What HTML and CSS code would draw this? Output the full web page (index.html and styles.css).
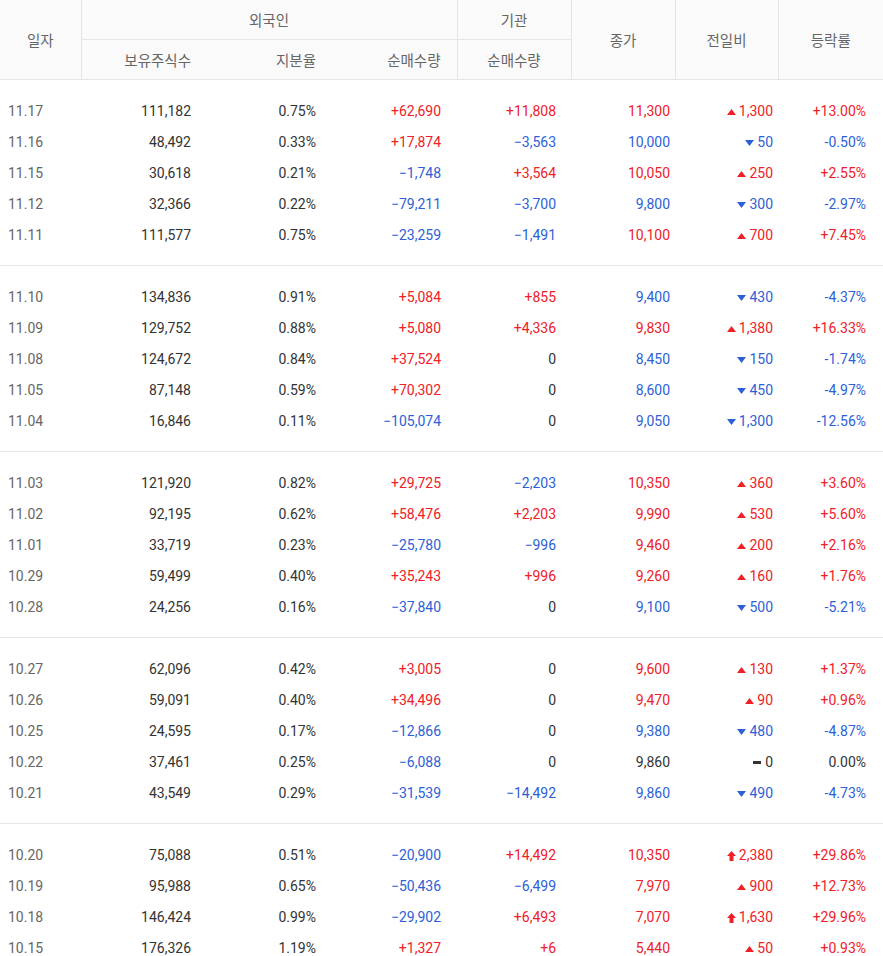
FILE: index.html
```html
<!DOCTYPE html>
<html lang="ko">
<head>
<meta charset="utf-8">
<link rel="stylesheet" href="styles.css">
</head>
<body>
<table class="tbl">
  <colgroup>
    <col class="c-date"><col class="c-hold"><col class="c-rate"><col class="c-fnet"><col class="c-inet"><col class="c-close"><col class="c-diff"><col class="c-pct">
  </colgroup>
  <thead>
    <tr class="h1">
      <th rowspan="2" class="ctr">일자</th>
      <th colspan="3" class="ctr">외국인</th>
      <th class="ctr">기관</th>
      <th rowspan="2" class="ctr">종가</th>
      <th rowspan="2" class="ctr">전일비</th>
      <th rowspan="2" class="ctr">등락률</th>
    </tr>
    <tr class="h2">
      <th class="rt">보유주식수</th>
      <th class="rt">지분율</th>
      <th class="rt">순매수량</th>
      <th class="ctr">순매수량</th>
    </tr>
  </thead>
  <tbody class="grp">
    <tr><td class="d">11.17</td><td>111,182</td><td>0.75%</td><td class="r">+62,690</td><td class="r">+11,808</td><td class="r cl">11,300</td><td class="r cl"><svg class="ico" viewBox="0 0 9 6"><path d="M4.5 0L9 6H0z" fill="#f02027"/></svg>1,300</td><td class="r pc">+13.00%</td></tr>
    <tr><td class="d">11.16</td><td>48,492</td><td>0.33%</td><td class="r">+17,874</td><td class="b">−3,563</td><td class="b cl">10,000</td><td class="b cl"><svg class="ico" viewBox="0 0 9 6"><path d="M0 0H9L4.5 6z" fill="#2d5fd8"/></svg>50</td><td class="b pc">-0.50%</td></tr>
    <tr><td class="d">11.15</td><td>30,618</td><td>0.21%</td><td class="b">−1,748</td><td class="r">+3,564</td><td class="r cl">10,050</td><td class="r cl"><svg class="ico" viewBox="0 0 9 6"><path d="M4.5 0L9 6H0z" fill="#f02027"/></svg>250</td><td class="r pc">+2.55%</td></tr>
    <tr><td class="d">11.12</td><td>32,366</td><td>0.22%</td><td class="b">−79,211</td><td class="b">−3,700</td><td class="b cl">9,800</td><td class="b cl"><svg class="ico" viewBox="0 0 9 6"><path d="M0 0H9L4.5 6z" fill="#2d5fd8"/></svg>300</td><td class="b pc">-2.97%</td></tr>
    <tr><td class="d">11.11</td><td>111,577</td><td>0.75%</td><td class="b">−23,259</td><td class="b">−1,491</td><td class="r cl">10,100</td><td class="r cl"><svg class="ico" viewBox="0 0 9 6"><path d="M4.5 0L9 6H0z" fill="#f02027"/></svg>700</td><td class="r pc">+7.45%</td></tr>
  </tbody>
  <tbody class="grp">
    <tr><td class="d">11.10</td><td>134,836</td><td>0.91%</td><td class="r">+5,084</td><td class="r">+855</td><td class="b cl">9,400</td><td class="b cl"><svg class="ico" viewBox="0 0 9 6"><path d="M0 0H9L4.5 6z" fill="#2d5fd8"/></svg>430</td><td class="b pc">-4.37%</td></tr>
    <tr><td class="d">11.09</td><td>129,752</td><td>0.88%</td><td class="r">+5,080</td><td class="r">+4,336</td><td class="r cl">9,830</td><td class="r cl"><svg class="ico" viewBox="0 0 9 6"><path d="M4.5 0L9 6H0z" fill="#f02027"/></svg>1,380</td><td class="r pc">+16.33%</td></tr>
    <tr><td class="d">11.08</td><td>124,672</td><td>0.84%</td><td class="r">+37,524</td><td>0</td><td class="b cl">8,450</td><td class="b cl"><svg class="ico" viewBox="0 0 9 6"><path d="M0 0H9L4.5 6z" fill="#2d5fd8"/></svg>150</td><td class="b pc">-1.74%</td></tr>
    <tr><td class="d">11.05</td><td>87,148</td><td>0.59%</td><td class="r">+70,302</td><td>0</td><td class="b cl">8,600</td><td class="b cl"><svg class="ico" viewBox="0 0 9 6"><path d="M0 0H9L4.5 6z" fill="#2d5fd8"/></svg>450</td><td class="b pc">-4.97%</td></tr>
    <tr><td class="d">11.04</td><td>16,846</td><td>0.11%</td><td class="b">−105,074</td><td>0</td><td class="b cl">9,050</td><td class="b cl"><svg class="ico" viewBox="0 0 9 6"><path d="M0 0H9L4.5 6z" fill="#2d5fd8"/></svg>1,300</td><td class="b pc">-12.56%</td></tr>
  </tbody>
  <tbody class="grp">
    <tr><td class="d">11.03</td><td>121,920</td><td>0.82%</td><td class="r">+29,725</td><td class="b">−2,203</td><td class="r cl">10,350</td><td class="r cl"><svg class="ico" viewBox="0 0 9 6"><path d="M4.5 0L9 6H0z" fill="#f02027"/></svg>360</td><td class="r pc">+3.60%</td></tr>
    <tr><td class="d">11.02</td><td>92,195</td><td>0.62%</td><td class="r">+58,476</td><td class="r">+2,203</td><td class="r cl">9,990</td><td class="r cl"><svg class="ico" viewBox="0 0 9 6"><path d="M4.5 0L9 6H0z" fill="#f02027"/></svg>530</td><td class="r pc">+5.60%</td></tr>
    <tr><td class="d">11.01</td><td>33,719</td><td>0.23%</td><td class="b">−25,780</td><td class="b">−996</td><td class="r cl">9,460</td><td class="r cl"><svg class="ico" viewBox="0 0 9 6"><path d="M4.5 0L9 6H0z" fill="#f02027"/></svg>200</td><td class="r pc">+2.16%</td></tr>
    <tr><td class="d">10.29</td><td>59,499</td><td>0.40%</td><td class="r">+35,243</td><td class="r">+996</td><td class="r cl">9,260</td><td class="r cl"><svg class="ico" viewBox="0 0 9 6"><path d="M4.5 0L9 6H0z" fill="#f02027"/></svg>160</td><td class="r pc">+1.76%</td></tr>
    <tr><td class="d">10.28</td><td>24,256</td><td>0.16%</td><td class="b">−37,840</td><td>0</td><td class="b cl">9,100</td><td class="b cl"><svg class="ico" viewBox="0 0 9 6"><path d="M0 0H9L4.5 6z" fill="#2d5fd8"/></svg>500</td><td class="b pc">-5.21%</td></tr>
  </tbody>
  <tbody class="grp">
    <tr><td class="d">10.27</td><td>62,096</td><td>0.42%</td><td class="r">+3,005</td><td>0</td><td class="r cl">9,600</td><td class="r cl"><svg class="ico" viewBox="0 0 9 6"><path d="M4.5 0L9 6H0z" fill="#f02027"/></svg>130</td><td class="r pc">+1.37%</td></tr>
    <tr><td class="d">10.26</td><td>59,091</td><td>0.40%</td><td class="r">+34,496</td><td>0</td><td class="r cl">9,470</td><td class="r cl"><svg class="ico" viewBox="0 0 9 6"><path d="M4.5 0L9 6H0z" fill="#f02027"/></svg>90</td><td class="r pc">+0.96%</td></tr>
    <tr><td class="d">10.25</td><td>24,595</td><td>0.17%</td><td class="b">−12,866</td><td>0</td><td class="b cl">9,380</td><td class="b cl"><svg class="ico" viewBox="0 0 9 6"><path d="M0 0H9L4.5 6z" fill="#2d5fd8"/></svg>480</td><td class="b pc">-4.87%</td></tr>
    <tr><td class="d">10.22</td><td>37,461</td><td>0.25%</td><td class="b">−6,088</td><td>0</td><td class="cl">9,860</td><td class="cl"><svg class="ico dash" viewBox="0 0 8 3"><rect width="8" height="3" fill="#333"/></svg>0</td><td class="pc">0.00%</td></tr>
    <tr><td class="d">10.21</td><td>43,549</td><td>0.29%</td><td class="b">−31,539</td><td class="b">−14,492</td><td class="b cl">9,860</td><td class="b cl"><svg class="ico" viewBox="0 0 9 6"><path d="M0 0H9L4.5 6z" fill="#2d5fd8"/></svg>490</td><td class="b pc">-4.73%</td></tr>
  </tbody>
  <tbody class="grp">
    <tr><td class="d">10.20</td><td>75,088</td><td>0.51%</td><td class="b">−20,900</td><td class="r">+14,492</td><td class="r cl">10,350</td><td class="r cl"><svg class="ico lim" viewBox="0 0 9 10"><path d="M4.5 0L9 5H6.5V10H2.5V5H0z" fill="#f02027"/></svg>2,380</td><td class="r pc">+29.86%</td></tr>
    <tr><td class="d">10.19</td><td>95,988</td><td>0.65%</td><td class="b">−50,436</td><td class="b">−6,499</td><td class="r cl">7,970</td><td class="r cl"><svg class="ico" viewBox="0 0 9 6"><path d="M4.5 0L9 6H0z" fill="#f02027"/></svg>900</td><td class="r pc">+12.73%</td></tr>
    <tr><td class="d">10.18</td><td>146,424</td><td>0.99%</td><td class="b">−29,902</td><td class="r">+6,493</td><td class="r cl">7,070</td><td class="r cl"><svg class="ico lim" viewBox="0 0 9 10"><path d="M4.5 0L9 5H6.5V10H2.5V5H0z" fill="#f02027"/></svg>1,630</td><td class="r pc">+29.96%</td></tr>
    <tr><td class="d">10.15</td><td>176,326</td><td>1.19%</td><td class="r">+1,327</td><td class="r">+6</td><td class="r cl">5,440</td><td class="r cl"><svg class="ico" viewBox="0 0 9 6"><path d="M4.5 0L9 6H0z" fill="#f02027"/></svg>50</td><td class="r pc">+0.93%</td></tr>
  </tbody>
</table>
</body>
</html>
```

FILE: styles.css
```css
html, body {
  margin: 0;
  padding: 0;
  background: #fff;
}
body {
  font-family: Roboto, "Noto Sans CJK KR", sans-serif;
  font-size: 14px;
  color: #333;
}
.tbl {
  width: 883px;
  border-collapse: collapse;
  table-layout: fixed;
}
.c-date { width: 81px; }
.c-hold { width: 126px; }
.c-rate { width: 125px; }
.c-fnet { width: 125px; }
.c-inet { width: 114px; }
.c-close { width: 104px; }
.c-diff { width: 103px; }
.c-pct { width: 105px; }

thead th {
  background: #fafafa;
  color: #666;
  font-weight: 400;
  font-size: 14.5px;
  height: 39px;
  padding: 0;
  border-left: 1px solid #e5e5e5;
  border-bottom: 1px solid #e5e5e5;
}
thead tr.h1 th:first-child { border-left: 0; }
thead th.ctr { text-align: center; }
thead th.rt { text-align: right; padding-right: 16px; }
thead tr.h2 th.rt { border-left: 0; }
thead tr.h2 th.rt:first-child { border-left: 1px solid #e5e5e5; }

tbody.grp { border-bottom: 1px solid #e5e5e5; }
tbody td {
  height: 31px;
  padding: 0 16px 0 0;
  text-align: right;
  white-space: nowrap;
  line-height: 31px;
  vertical-align: top;
}
tbody tr:first-child td { padding-top: 16px; }
tbody tr:last-child td { padding-bottom: 14px; }
tbody td.d {
  text-align: left;
  padding-left: 8px;
  padding-right: 0;
  color: #666;
}
tbody td:nth-child(5) { padding-right: 15px; }
tbody td.cl { padding-right: 5px; }
tbody td.pc { padding-right: 17px; }

.r { color: #f02027; }
.b { color: #2d5fd8; }

.ico {
  width: 9px;
  height: 6px;
  margin-right: 3px;
  vertical-align: 1px;
}
.ico.lim {
  height: 10px;
  vertical-align: -1px;
}
.ico.dash {
  width: 8px;
  height: 3px;
  margin-right: 4px;
  vertical-align: 3px;
}
```
